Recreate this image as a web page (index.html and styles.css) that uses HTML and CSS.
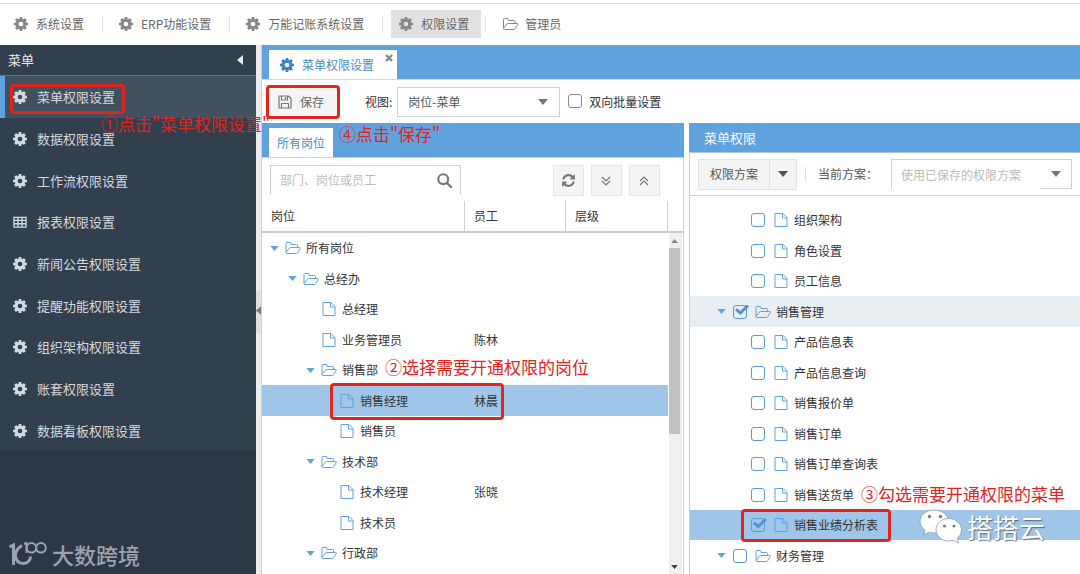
FILE: index.html
```html
<!DOCTYPE html>
<html lang="zh-CN">
<head>
<meta charset="utf-8">
<title>菜单权限设置</title>
<link rel="stylesheet" href="styles.css">
</head>
<body>
<svg class="sprite" aria-hidden="true">
  <symbol id="gear" viewBox="0 128 1536 1536"><path fill="currentColor" fill-rule="evenodd" d="M1024 896a256 256 0 1 1-512 0a256 256 0 1 1 512 0zM1536 787v222q0 12-8 23t-20 13l-185 28q-19 54-39 91 35 50 107 138 10 12 10 25t-9 23q-27 37-99 108t-94 71q-12 0-26-9l-138-108q-44 23-91 38-16 136-29 186-7 28-36 28h-222q-14 0-24.500-8.500t-11.500-21.500l-28-184q-49-16-90-37l-141 107q-10 9-25 9-14 0-25-11-126-114-165-168-7-10-7-23 0-12 8-23 15-21 51-66.500t54-70.500q-27-50-41-99l-183-27q-13-2-21-12.500t-8-23.500v-222q0-12 8-23t19-13l186-28q14-46 39-92-40-57-107-138-10-12-10-24 0-10 9-23 26-36 98.500-107.500t94.500-71.500q13 0 26 10l138 107q44-23 91-38 16-136 29-186 7-28 36-28h222q14 0 24.500 8.500t11.500 21.500l28 184q49 16 90 37l142-107q9-9 24-9 13 0 25 10 129 119 165 170 7 8 7 22 0 12-8 23-15 21-51 66.500t-54 70.500q26 50 41 98l183 28q13 2 21 12.500t8 23.500z"/></symbol>
  <symbol id="folder" viewBox="0 0 16 14"><path fill="none" stroke="currentColor" stroke-linejoin="round" d="M1 11.500V2.500Q1 1.500 2 1.500H5Q6 1.500 6 2.500V3.500H11.500Q12.500 3.500 12.500 4.500V6.500M1 11.500L4.200 7.200Q4.700 6.500 5.500 6.500H14.500Q15.800 6.500 15.200 7.500L12.800 11.500Q12.200 12.500 11.300 12.500H2Q1 12.500 1 11.500Z"/></symbol>
  <symbol id="file" viewBox="0 0 16 16"><path fill="none" stroke="currentColor" stroke-linejoin="round" d="M2 1.500H10L14 5.500V14.500H2ZM9.500 1.500V6H14"/></symbol>
  <symbol id="grid" viewBox="0 0 15 13"><path fill="none" stroke="currentColor" stroke-width="1.400" d="M1 1.500H14V12H1ZM1 4.800H14M1 8.400H14M5.300 1.500V12M9.700 1.500V12"/></symbol>
  <symbol id="save" viewBox="0 0 14 14"><path fill="none" stroke="currentColor" stroke-width="1.200" stroke-linejoin="round" d="M1 1H10.500L13 3.500V13H1ZM3.500 1V5H9.500V1M7.500 2V4M3.500 13V8.500H10.500V13"/></symbol>
  <symbol id="search" viewBox="0 0 14 14"><circle cx="5.800" cy="5.800" r="4.600" fill="none" stroke="currentColor" stroke-width="2"/><path d="M9.300 9.300L13 13" stroke="currentColor" stroke-width="2.200" stroke-linecap="round"/></symbol>
  <symbol id="refresh" viewBox="0 0 1792 1792"><path fill="currentColor" d="M1639 1056q0 5-1 7-64 268-268 434.500t-478 166.500q-146 0-282.500-55t-243.500-157l-129 129q-19 19-45 19t-45-19-19-45v-448q0-26 19-45t45-19h448q26 0 45 19t19 45-19 45l-137 137q71 66 161 102t187 36q134 0 250-65t186-179q11-17 53-117 8-23 30-23h192q13 0 22.500 9.500t9.500 22.500zm25-800v448q0 26-19 45t-45 19h-448q-26 0-45-19t-19-45 19-45l138-138q-148-137-349-137-134 0-250 65t-186 179q-11 17-53 117-8 23-30 23h-199q-13 0-22.500-9.500t-9.500-22.500v-7q65-268 270-434.500t480-166.500q146 0 284 55.500t245 156.500l130-129q19-19 45-19t45 19 19 45z"/></symbol>
  <symbol id="down2" viewBox="0 0 10 10"><path fill="none" stroke="currentColor" stroke-width="1.200" d="M1 1L5 5L9 1M1 5L5 9L9 5"/></symbol>
  <symbol id="up2" viewBox="0 0 10 10"><path fill="none" stroke="currentColor" stroke-width="1.200" d="M1 5L5 1L9 5M1 9L5 5L9 9"/></symbol>
  <symbol id="close" viewBox="0 0 8 8"><path stroke="currentColor" stroke-width="2.400" d="M1 1L7 7M7 1L1 7"/></symbol>
  <symbol id="caret" viewBox="0 0 10 6"><path fill="currentColor" d="M0 0H10L5 6Z"/></symbol>
  <symbol id="caret-up" viewBox="0 0 10 6"><path fill="currentColor" d="M0 6H10L5 0Z"/></symbol>
  <symbol id="caret-left" viewBox="0 0 6 10"><path fill="currentColor" d="M6 0V10L0 5Z"/></symbol>
</svg>

<nav class="topnav">
  <a class="topnav-item" href="#"><svg class="ic14"><use href="#gear"/></svg>系统设置</a>
  <a class="topnav-item" href="#"><svg class="ic14"><use href="#gear"/></svg>ERP功能设置</a>
  <a class="topnav-item" href="#"><svg class="ic14"><use href="#gear"/></svg>万能记账系统设置</a>
  <a class="topnav-item current" href="#"><svg class="ic14"><use href="#gear"/></svg>权限设置</a>
  <a class="topnav-item" href="#"><svg class="ic-folder"><use href="#folder"/></svg>管理员</a>
</nav>

<div class="workspace">
  <aside class="sidebar">
    <header class="sidebar-head">菜单<button class="bare" aria-label="收起"><svg class="fold"><use href="#caret-left"/></svg></button></header>
    <nav class="menu">
      <a class="menu-item current" href="#"><svg class="ic14"><use href="#gear"/></svg>菜单权限设置<span class="mark mark-menu"></span><span class="note note-menu">①点击"菜单权限设置"</span></a>
      <a class="menu-item" href="#"><svg class="ic14"><use href="#gear"/></svg>数据权限设置</a>
      <a class="menu-item" href="#"><svg class="ic14"><use href="#gear"/></svg>工作流权限设置</a>
      <a class="menu-item" href="#"><svg class="ic14"><use href="#grid"/></svg>报表权限设置</a>
      <a class="menu-item" href="#"><svg class="ic14"><use href="#gear"/></svg>新闻公告权限设置</a>
      <a class="menu-item" href="#"><svg class="ic14"><use href="#gear"/></svg>提醒功能权限设置</a>
      <a class="menu-item" href="#"><svg class="ic14"><use href="#gear"/></svg>组织架构权限设置</a>
      <a class="menu-item" href="#"><svg class="ic14"><use href="#gear"/></svg>账套权限设置</a>
      <a class="menu-item" href="#"><svg class="ic14"><use href="#gear"/></svg>数据看板权限设置</a>
    </nav>
    <div class="brand">
      <svg class="brand-logo" viewBox="0 0 38 26"><g fill="none" stroke="currentColor"><path stroke-width="3" d="M0.500 6L4.500 4V24M13 4.500Q6.500 8 6.500 14.500Q7 22.500 14.500 22.500Q21 22 21.500 15.500"/><path stroke-width="2" d="M15 3L17.500 2V12"/><circle cx="22.500" cy="6.800" r="4.800" stroke-width="2"/><circle cx="32" cy="6.800" r="4.800" stroke-width="2"/></g></svg>
      <span>大数跨境</span>
    </div>
  </aside>
  <button class="splitter" aria-label="折叠菜单"><svg><use href="#caret-left"/></svg></button>

  <main class="main">
    <div class="tabs">
      <div class="tab"><svg class="ic14"><use href="#gear"/></svg>菜单权限设置<button class="bare tab-close" aria-label="关闭"><svg><use href="#close"/></svg></button></div>
    </div>
    <div class="toolbar">
      <button class="save"><svg class="ic14"><use href="#save"/></svg>保存<span class="mark mark-save"></span></button>
      <label class="view-label" for="view">视图:</label>
      <span class="view"><select id="view"><option>岗位-菜单</option></select><svg class="caret"><use href="#caret"/></svg></span>
      <label class="batch"><input type="checkbox" class="box grey">双向批量设置</label>
    </div>

    <div class="panels">
      <section class="panel posts">
        <header class="posts-head"><button class="posts-tab">所有岗位</button><span class="note note-save">④点击"保存"</span></header>
        <div class="posts-tools">
          <div class="search"><input type="text" aria-label="搜索" placeholder="部门、岗位或员工"><button class="bare" aria-label="搜索"><svg class="ic15"><use href="#search"/></svg></button></div>
          <div class="tool-group">
            <button class="tool" aria-label="刷新"><svg class="ic15"><use href="#refresh"/></svg></button>
            <button class="tool" aria-label="展开"><svg class="ic-dbl"><use href="#down2"/></svg></button>
            <button class="tool" aria-label="收起"><svg class="ic-dbl"><use href="#up2"/></svg></button>
          </div>
        </div>
        <div class="posts-body">
          <table class="tree-table">
            <colgroup><col class="c-post"><col class="c-staff"><col class="c-level"><col></colgroup>
            <thead><tr><th>岗位</th><th>员工</th><th>层级</th><th></th></tr></thead>
            <tbody>
              <tr><td><div class="node d0"><svg class="twist"><use href="#caret"/></svg><svg class="ic-node"><use href="#folder"/></svg>所有岗位</div></td><td></td><td></td><td></td></tr>
              <tr><td><div class="node d1"><svg class="twist"><use href="#caret"/></svg><svg class="ic-node"><use href="#folder"/></svg>总经办</div></td><td></td><td></td><td></td></tr>
              <tr><td><div class="node d2 leaf"><svg class="ic-node"><use href="#file"/></svg>总经理</div></td><td></td><td></td><td></td></tr>
              <tr><td><div class="node d2 leaf"><svg class="ic-node"><use href="#file"/></svg>业务管理员</div></td><td>陈林</td><td></td><td></td></tr>
              <tr><td><div class="node d2"><svg class="twist"><use href="#caret"/></svg><svg class="ic-node"><use href="#folder"/></svg>销售部<span class="note note-post">②选择需要开通权限的岗位</span></div></td><td></td><td></td><td></td></tr>
              <tr class="selected"><td><div class="node d3 leaf"><svg class="ic-node"><use href="#file"/></svg>销售经理<span class="mark mark-post"></span></div></td><td>林晨</td><td></td><td></td></tr>
              <tr><td><div class="node d3 leaf"><svg class="ic-node"><use href="#file"/></svg>销售员</div></td><td></td><td></td><td></td></tr>
              <tr><td><div class="node d2"><svg class="twist"><use href="#caret"/></svg><svg class="ic-node"><use href="#folder"/></svg>技术部</div></td><td></td><td></td><td></td></tr>
              <tr><td><div class="node d3 leaf"><svg class="ic-node"><use href="#file"/></svg>技术经理</div></td><td>张晓</td><td></td><td></td></tr>
              <tr><td><div class="node d3 leaf"><svg class="ic-node"><use href="#file"/></svg>技术员</div></td><td></td><td></td><td></td></tr>
              <tr><td><div class="node d2"><svg class="twist"><use href="#caret"/></svg><svg class="ic-node"><use href="#folder"/></svg>行政部</div></td><td></td><td></td><td></td></tr>
            </tbody>
          </table>
          <div class="scrollbar"><svg class="up"><use href="#caret-up"/></svg><span class="thumb"></span><svg class="down"><use href="#caret"/></svg></div>
        </div>
      </section>

      <section class="panel rights">
        <header class="rights-head">菜单权限</header>
        <div class="rights-tools">
          <div class="split"><button>权限方案</button><button aria-label="更多"><svg class="caret"><use href="#caret"/></svg></button></div>
          <span class="divider"></span>
          <label for="plan">当前方案：</label>
          <div class="combo"><input id="plan" type="text" placeholder="使用已保存的权限方案"><button class="bare combo-open" aria-label="展开"><svg class="caret"><use href="#caret"/></svg></button></div>
        </div>
        <div class="rights-tree">
          <label class="item leaf"><input type="checkbox" class="box"><svg class="ic-node"><use href="#file"/></svg>组织架构</label>
          <label class="item leaf"><input type="checkbox" class="box"><svg class="ic-node"><use href="#file"/></svg>角色设置</label>
          <label class="item leaf"><input type="checkbox" class="box"><svg class="ic-node"><use href="#file"/></svg>员工信息</label>
          <label class="item hover"><svg class="twist"><use href="#caret"/></svg><input type="checkbox" class="box" checked><svg class="ic-node"><use href="#folder"/></svg>销售管理</label>
          <label class="item leaf"><input type="checkbox" class="box"><svg class="ic-node"><use href="#file"/></svg>产品信息表</label>
          <label class="item leaf"><input type="checkbox" class="box"><svg class="ic-node"><use href="#file"/></svg>产品信息查询</label>
          <label class="item leaf"><input type="checkbox" class="box"><svg class="ic-node"><use href="#file"/></svg>销售报价单</label>
          <label class="item leaf"><input type="checkbox" class="box"><svg class="ic-node"><use href="#file"/></svg>销售订单</label>
          <label class="item leaf"><input type="checkbox" class="box"><svg class="ic-node"><use href="#file"/></svg>销售订单查询表</label>
          <label class="item leaf"><input type="checkbox" class="box"><svg class="ic-node"><use href="#file"/></svg>销售送货单<span class="note note-right">③勾选需要开通权限的菜单</span></label>
          <label class="item leaf selected"><input type="checkbox" class="box" checked><svg class="ic-node"><use href="#file"/></svg>销售业绩分析表<span class="mark mark-right"></span></label>
          <label class="item"><svg class="twist"><use href="#caret"/></svg><input type="checkbox" class="box"><svg class="ic-node"><use href="#folder"/></svg>财务管理</label>
        </div>
        <div class="watermark">
          <svg viewBox="0 0 44 36"><g fill="#fff" stroke="#8a9bab" stroke-width=".8"><path d="M15 1C7 1 1 6 1 12.500C1 16 3 19 6 21.200L4.500 26L10 23.200Q12.500 24 15 24C23 24 29.500 19 29.500 12.500S23 1 15 1Z"/><path d="M29.500 9.500C22.500 9.500 17 14.500 17 20.700S22.500 32 29.500 32Q32 32 34.500 31.200L39.500 34L38 29.500C41 27.300 42.500 24 42.500 20.700C42.500 14.500 36.500 9.500 29.500 9.500Z"/></g><g fill="#6f8091"><circle cx="10.500" cy="7.500" r="1.700"/><circle cx="21.500" cy="7.500" r="1.700"/><circle cx="25.500" cy="17" r="1.600"/><circle cx="35" cy="17" r="1.600"/></g></svg>
          <span>搭搭云</span>
        </div>
      </section>
    </div>
  </main>
</div>
</body>
</html>
```
FILE: styles.css
```css
:root {
  --blue: #5fa2dd;
  --select: #9fc5e8;
  --line: #d0d0d0;
  --red: #e0251f;
}
* { box-sizing: border-box; }
body {
  margin: 0;
  min-height: 100vh;
  display: flex;
  flex-direction: column;
  overflow: hidden;
  background: #fff;
  color: #333;
  font: 12px/20px "Noto Sans CJK SC", sans-serif;
}
a { color: inherit; text-decoration: none; }
button, input, select { font: inherit; color: inherit; margin: 0; }
button { cursor: pointer; }
svg { display: block; flex: none; }
.sprite { position: absolute; width: 0; height: 0; }
.bare { border: 0; background: none; padding: 0; }
.ic14 { width: 14px; height: 14px; }
.ic15 { width: 15px; height: 15px; }
.ic-dbl { width: 10px; height: 10px; }
.ic-folder { width: 17px; height: 14px; }
.caret { width: 10px; height: 6px; color: #777; }

/* top navigation */
.topnav {
  display: flex;
  align-items: center;
  gap: 19px;
  height: 45px;
  padding: 3px 6px 0;
  color: #666;
  position: relative;
}
.topnav::before {
  content: "";
  position: absolute;
  left: 0;
  right: 0;
  top: 3px;
  border-top: 1px solid #ddd;
}
.topnav-item {
  display: flex;
  align-items: center;
  gap: 8px;
  height: 28px;
  padding: 0 8px;
  position: relative;
}
.topnav-item .ic14 { color: #888; }
.topnav-item .ic-folder { color: #888; margin-right: -2px; }
.topnav-item + .topnav-item::before {
  content: "";
  position: absolute;
  left: -9px;
  top: 7px;
  height: 14px;
  border-left: 1px solid #ddd;
}
.topnav-item.current { background: #e1e1e1; padding: 0 12px 0 8px; }
.topnav-item.current + .topnav-item { margin-left: -6px; }

.workspace { flex: 1; display: flex; }

/* sidebar */
.sidebar {
  flex: 0 0 256px;
  background: #2d3745;
  color: #d3d9df;
  font-size: 13px;
  display: flex;
  flex-direction: column;
  position: relative;
  z-index: 2;
}
.sidebar-head {
  display: flex;
  align-items: center;
  justify-content: space-between;
  height: 31px;
  padding: 0 13px 0 8px;
  background: #323f4d;
  border-bottom: 1px solid #66727e;
  color: #e8ebee;
}
.fold { width: 6px; height: 10px; }
.menu { background: #32404e; }
.menu-item {
  display: flex;
  align-items: center;
  gap: 10px;
  height: 42px;
  padding-left: 13px;
  position: relative;
}
.menu-item:nth-child(3n) { height: 41px; }
.menu-item.current {
  background: #42515f;
  border-left: 5px solid var(--blue);
  padding-left: 8px;
}
.brand {
  display: flex;
  align-items: center;
  gap: 5px;
  margin-top: auto;
  padding: 0 9px 6px;
  color: #9ba3ad;
  font-size: 22px;
  font-weight: 500;
  line-height: 28px;
}
.brand-logo { width: 38px; height: 26px; }
.splitter {
  flex: 0 0 6px;
  border: 0;
  border-right: 1px solid #d0d0d0;
  background: linear-gradient(#dfdfdf, #dfdfdf) 0 246px / 100% 42px no-repeat #ececec;
  display: flex;
  align-items: flex-start;
  padding: 261px 0 0;
}
.splitter svg { width: 5px; height: 9px; color: #777; }

/* main area */
.main { flex: 1; min-width: 0; display: flex; flex-direction: column; }
.tabs {
  background: var(--blue);
  border-bottom: 1px solid #c4daf0;
  padding: 5px 7px 0;
  display: flex;
}
.tab {
  display: flex;
  align-items: center;
  gap: 8px;
  height: 29px;
  padding: 0 4px 0 11px;
  background: #fff;
  color: #4a8ac4;
}
.tab .ic14 { color: #3f83bd; }
.tab-close { align-self: flex-start; margin: 4px 0 0 3px; }
.tab-close svg { width: 8px; height: 8px; color: #888; }
.toolbar {
  display: flex;
  align-items: center;
  height: 43px;
  padding-left: 5px;
}
.save {
  display: flex;
  align-items: center;
  gap: 8px;
  height: 32px;
  width: 72px;
  padding: 0 0 0 11px;
  border: 0;
  background: #f4f4f4;
  color: #666;
  position: relative;
}
.save svg { color: #777; }
.view-label { margin: 0 5px 0 26px; }
.view { position: relative; display: flex; width: 163px; margin-right: 8px; }
.view select {
  appearance: none;
  width: 100%;
  height: 30px;
  padding: 0 10px;
  border: 1px solid var(--line);
  border-radius: 0;
  background: #fff;
  color: #555;
}
.view .caret { position: absolute; right: 12px; top: 12px; }
.batch { display: flex; align-items: center; gap: 7px; }

.box {
  appearance: none;
  flex: none;
  width: 14px;
  height: 14px;
  border: 1px solid #5b9bd0;
  border-radius: 3px;
  background: #fff;
  position: relative;
}
.box.grey { border-color: #888; margin-bottom: 2px; }
.box:checked { background: transparent; }
.box:checked::after {
  content: "";
  position: absolute;
  left: 1px;
  top: -1px;
  width: 14px;
  height: 11px;
  background: #4a94d0;
  clip-path: polygon(0 50%, 15% 33%, 38% 58%, 85% 0, 100% 18%, 38% 95%);
}

.panels { flex: 1; display: flex; gap: 5px; }
.panel { min-width: 0; display: flex; flex-direction: column; position: relative; }
.posts { flex: 422 1 0; border-right: 1px solid var(--line); }
.rights { flex: 391 1 0; border-left: 1px solid var(--line); }

/* positions panel */
.posts-head {
  display: flex;
  height: 35px;
  padding: 5px 7px 0;
  margin-right: -1px;
  background: var(--blue);
  border-bottom: 1px solid var(--line);
  position: relative;
}
.posts-tab { border: 0; background: #fff; color: #4a8ac4; width: 64px; padding: 0; }
.posts-tools {
  display: flex;
  align-items: flex-start;
  justify-content: space-between;
  height: 43px;
  padding: 7px 23px 0 8px;
}
.search {
  display: flex;
  align-items: center;
  justify-content: space-between;
  flex: 0 0 191px;
  height: 30px;
  border: 1px solid var(--line);
  border-bottom-color: transparent;
  padding: 0 8px 0 9px;
}
.search input, .combo input { border: 0; padding: 0; min-width: 0; flex: 1; background: none; outline: 0; }
::placeholder { color: #bbb; opacity: 1; }
.search svg { color: #777; }
.tool-group { display: flex; gap: 7px; }
.tool {
  display: grid;
  place-items: center;
  width: 31px;
  height: 31px;
  padding: 0;
  border: 1px solid #e6e6e6;
  background: #f5f5f5;
  color: #777;
}
.posts-body { flex: 1; position: relative; }
.tree-table { width: 100%; table-layout: fixed; border-collapse: separate; border-spacing: 0; }
.c-post { width: 203px; }
.c-staff { width: 101px; }
.c-level { width: 102px; }
th {
  height: 32px;
  padding: 0 9px;
  text-align: left;
  font-weight: 400;
  border-right: 1px solid var(--line);
  border-bottom: 2px solid #ccc;
}
th:last-child { border-right: 0; }
td { height: 30px; padding: 0 9px; }
tr:nth-child(even) td { height: 31px; }
td:first-child { padding: 0; }
.selected td:nth-child(-n+3) { background: var(--select); }
.node { display: flex; align-items: center; position: relative; height: 30px; white-space: nowrap; }
.d0 { padding-left: 8px; }
.d1 { padding-left: 26px; }
.d2 { padding-left: 44px; }
.d3 { padding-left: 62px; }
.node.leaf::before { content: ""; width: 15px; }
.twist { width: 9px; height: 5px; margin-right: 6px; color: var(--blue); }
.ic-node { width: 16px; height: 16px; margin-right: 5px; color: var(--blue); }
.scrollbar {
  position: absolute;
  top: 32px;
  bottom: 0;
  right: 1px;
  width: 13px;
  padding: 6px 1px 5px 0;
  background: #f0f0f0;
  display: flex;
  flex-direction: column;
  align-items: center;
}
.scrollbar svg { width: 7px; height: 4px; color: #888; }
.scrollbar .down { margin-top: auto; color: #444; }
.thumb { width: 11px; height: 186px; margin-top: 5px; background: #c1c1c1; }

/* rights panel */
.rights-head {
  height: 30px;
  margin-left: -1px;
  padding: 5px 15px;
  background: var(--blue);
  border-bottom: 1px solid #a8c4de;
  color: #fff;
  font-size: 13px;
}
.rights-tools {
  display: flex;
  align-items: center;
  height: 43px;
  padding: 0 8px;
  border-bottom: 1px solid var(--line);
  color: #555;
}
.split { display: flex; }
.split button {
  display: grid;
  place-items: center;
  height: 31px;
  border: 1px solid #e2e2e2;
  background: #f4f4f4;
  padding: 0 11px;
}
.split button + button { border-left: 0; padding: 0 8px; }
.split .caret { color: #555; }
.divider { height: 14px; margin: 0 12px 0 8px; border-left: 1px solid #ddd; }
.combo {
  display: flex;
  align-items: center;
  flex: 1;
  height: 30px;
  margin-left: 13px;
  padding-left: 9px;
  border: 1px solid var(--line);
  border-bottom: 0;
}
.combo-open {
  display: grid;
  place-items: center;
  align-self: stretch;
  width: 31px;
  border-bottom: 1px solid var(--line);
}
.rights-tree { padding-top: 9px; }
.item { display: flex; align-items: center; height: 30px; padding-left: 27px; position: relative; white-space: nowrap; }
.item:nth-child(even) { height: 31px; }
.item.leaf { padding-left: 61px; }
.item .twist { margin-right: 7px; }
.item .box { margin-right: 8px; }
.item.hover { background: #e9eef3; }
.item.selected { background: var(--select); }

/* step-by-step callouts */
.mark {
  position: absolute;
  border: 3px solid var(--red);
  border-radius: 4px;
  pointer-events: none;
  z-index: 3;
}
.note {
  position: absolute;
  color: var(--red);
  font-size: 17px;
  line-height: 24px;
  white-space: nowrap;
  pointer-events: none;
  z-index: 3;
}
.mark-menu { left: 5px; top: 8px; width: 115px; height: 30px; }
.note-menu { left: 96px; top: 36px; }
.mark-save { left: -1px; top: -1px; width: 74px; height: 34px; }
.note-save { left: 77px; top: -1px; }
.note-post { left: 123px; top: 0; }
.mark-post { left: 68px; top: -3px; width: 174px; height: 37px; }
.note-right { left: 171px; top: 3px; }
.mark-right { left: 51px; top: -1px; width: 150px; height: 33px; }

.watermark {
  position: absolute;
  right: 35px;
  bottom: 29px;
  display: flex;
  align-items: center;
  gap: 4px;
  color: #fff;
  font-size: 26px;
  line-height: 36px;
  text-shadow: 1px 1px 1px #5d6f80;
}
.watermark svg { width: 44px; height: 36px; }
```
